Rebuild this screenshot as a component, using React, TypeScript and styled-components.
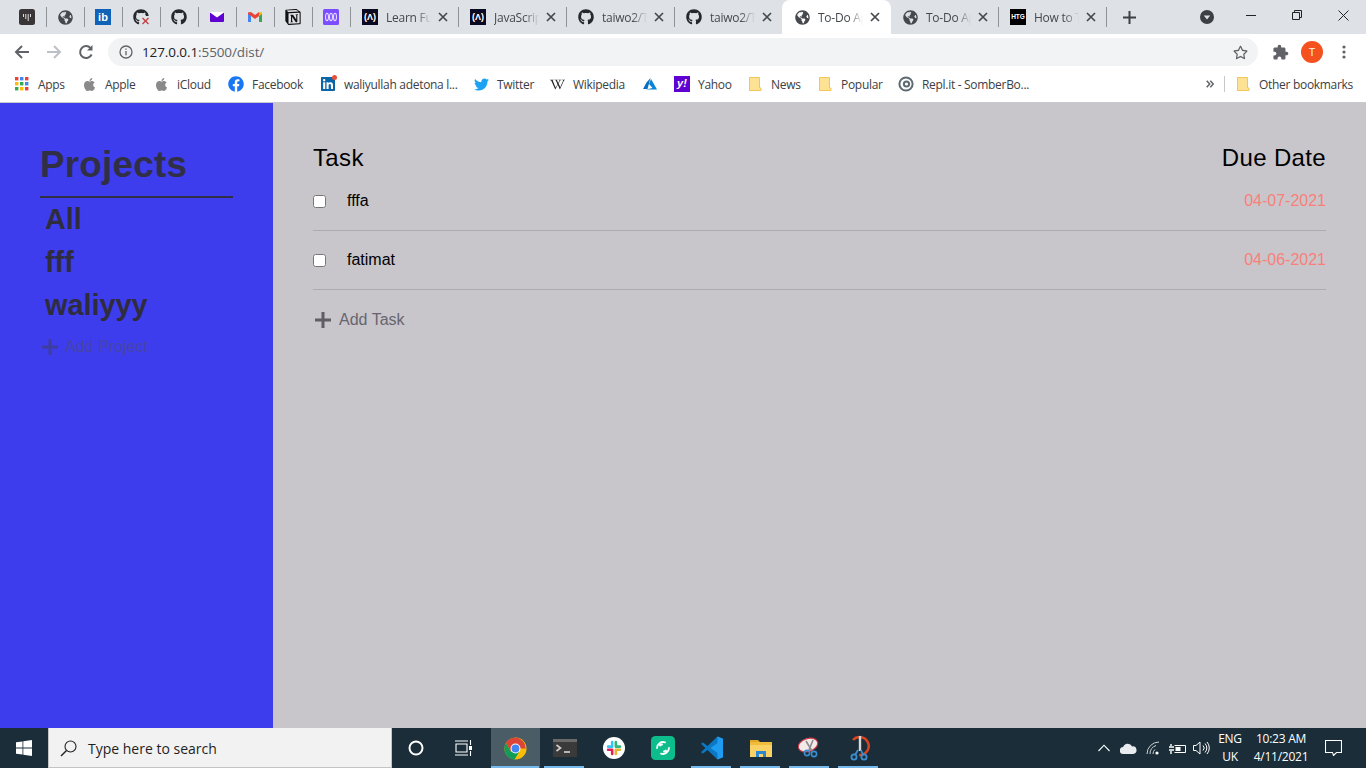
import React from "react";
import styled, { createGlobalStyle } from "styled-components";
import { FaGithub, FaApple, FaFacebook, FaTwitter, FaWikipediaW, FaLinkedin, FaGlobeAmericas, FaRegStar } from "react-icons/fa";
import { SiNotion } from "react-icons/si";

const Global = createGlobalStyle`
  html, body { margin: 0; padding: 0; height: 100%; overflow: hidden; }
  #root { height: 100%; }
  * { box-sizing: border-box; }
`;

const uiFont = `"Open Sans", "Noto Sans", "Liberation Sans", sans-serif`;
const webFont = `"Liberation Sans", Arial, sans-serif`;

const Screen = styled.div`
  display: flex;
  flex-direction: column;
  height: 768px;
  width: 1366px;
  font-family: ${webFont};
`;

/* ---------- Tab strip ---------- */
const TabStrip = styled.div`
  display: flex;
  align-items: stretch;
  height: 34px;
  background: #dee1e6;
  padding-left: 9px;
`;

const Tab = styled.div<{ $wide?: boolean; $active?: boolean }>`
  position: relative;
  flex: none;
  width: ${(p) => (p.$active ? 109 : p.$wide ? 108 : 38)}px;
  margin-left: ${(p) => (p.$active ? -1 : 0)}px;
  display: flex;
  align-items: center;
  justify-content: ${(p) => (p.$wide ? "flex-start" : "center")};
  padding: 0 ${(p) => (p.$wide ? 0 : 2)}px 0 ${(p) => (p.$active ? 12 : p.$wide ? 11 : 0)}px;
  background: ${(p) => (p.$active ? "#ffffff" : "transparent")};
  border-radius: ${(p) => (p.$active ? "8px 8px 0 0" : "0")};
  &::after {
    content: "";
    display: ${(p) => (p.$active ? "none" : "block")};
    position: absolute;
    right: 0;
    top: 7px;
    height: 20px;
    width: 1px;
    background: #8f9296;
  }
`;

const TabIconBox = styled.span`
  flex: none;
  width: 16px;
  height: 16px;
  display: flex;
  align-items: center;
  justify-content: center;
  color: #45484c;
`;

const TabTitle = styled.span`
  flex: none;
  width: 45px;
  margin-left: 8px;
  overflow: hidden;
  white-space: nowrap;
  font: 12px ${uiFont};
  letter-spacing: -0.25px;
  color: #45494e;
  -webkit-mask-image: linear-gradient(to right, #000 68%, transparent 100%);
  mask-image: linear-gradient(to right, #000 68%, transparent 100%);
`;

const TabClose = styled.span`
  flex: none;
  margin-left: 6px;
  width: 12px;
  height: 12px;
  display: flex;
  color: #45484c;
`;

const NewTab = styled.div`
  flex: none;
  width: 46px;
  margin-left: -1px;
  display: flex;
  align-items: center;
  justify-content: center;
  color: #3c4043;
`;

const TabSearch = styled.div`
  flex: none;
  margin-left: auto;
  margin-right: 7px;
  width: 28px;
  display: flex;
  align-items: center;
  justify-content: center;
`;

const WinButton = styled.div`
  flex: none;
  width: 46px;
  display: flex;
  align-items: center;
  justify-content: center;
  padding-bottom: 4px;
  color: #222;
`;

const IbMark = styled.span`
  width: 16px;
  height: 16px;
  background: #0f62b8;
  color: #fff;
  font: bold 11px/16px ${webFont};
  text-align: center;
`;

const FccMark = styled.span`
  width: 16px;
  height: 16px;
  background: #0a0a23;
  color: #fff;
  font: bold 9px/16px ${webFont};
  text-align: center;
  white-space: nowrap;
`;

const HtgMark = styled.span`
  width: 16px;
  height: 16px;
  background: #000;
  color: #fff;
  font: bold 6.5px/16px ${webFont};
  text-align: center;
`;

/* ---------- Toolbar ---------- */
const Toolbar = styled.div`
  display: flex;
  align-items: center;
  height: 35px;
  background: #fff;
  padding: 1px 0 0 6px;
`;

const NavButton = styled.div`
  flex: none;
  width: 32px;
  display: flex;
  justify-content: center;
`;

const Omnibox = styled.div`
  flex: none;
  width: 1150px;
  height: 28px;
  margin-left: 6px;
  border-radius: 14px;
  background: #f1f3f4;
  display: flex;
  align-items: center;
  padding: 0 10px 0 11px;
`;

const Url = styled.span`
  margin-left: 9px;
  font: 13.5px ${uiFont};
  color: #5f6368;
  letter-spacing: -0.1px;
  b { font-weight: 400; color: #202124; }
`;

const OmniEnd = styled.span`
  margin-left: auto;
  display: flex;
  color: #5f6368;
`;

const ToolEnd = styled.div`
  flex: none;
  display: flex;
  align-items: center;
  margin-left: 6px;
`;

const ToolSlot = styled.span`
  flex: none;
  width: 32px;
  display: flex;
  justify-content: center;
  color: #5f6368;
`;

const Avatar = styled.span`
  width: 22px;
  height: 22px;
  border-radius: 50%;
  background: #f4511e;
  color: #fff;
  font: 11px/22px ${uiFont};
  text-align: center;
`;

/* ---------- Bookmarks ---------- */
const Bookmarks = styled.div`
  display: flex;
  align-items: center;
  height: 34px;
  background: #fff;
  border-bottom: 1px solid #c9c9cd;
  padding: 0 0 3px 14px;
`;

const Bookmark = styled.div<{ $w: number }>`
  flex: none;
  width: ${(p) => p.$w}px;
  display: flex;
  align-items: center;
  gap: 8px;
`;

const BmIcon = styled.span`
  position: relative;
  flex: none;
  width: 16px;
  height: 16px;
  display: flex;
  align-items: center;
  justify-content: center;
`;

const BmLabel = styled.span`
  font: 12px ${uiFont};
  letter-spacing: -0.3px;
  color: #3c4043;
  white-space: nowrap;
`;

const Chevrons = styled.span`
  flex: none;
  margin-left: auto;
  display: flex;
`;

const BmDivider = styled.span`
  flex: none;
  width: 1px;
  height: 16px;
  background: #c6c8cb;
  margin: 0 10px;
`;

const YahooMark = styled.span`
  width: 16px;
  height: 16px;
  background: #6001d2;
  color: #fff;
  font: italic bold 11px/15px ${webFont};
  text-align: center;
`;

const NotifyDot = styled.span`
  position: absolute;
  top: -1px;
  right: -1px;
  width: 5px;
  height: 5px;
  border-radius: 50%;
  background: #e8503a;
`;

/* ---------- Page ---------- */
const Page = styled.div`
  flex: 1;
  display: flex;
  min-height: 0;
`;

const Sidebar = styled.aside`
  flex: none;
  width: 273px;
  background: #3d3dee;
  padding: 41px 40px 0;
  color: #2c2a3f;
`;

const SideTitle = styled.h1`
  margin: 0;
  padding-bottom: 10px;
  font-size: 36.8px;
  line-height: 42px;
  font-weight: 700;
  letter-spacing: 0.25px;
  color: #312f45;
  border-bottom: 2px solid #312f45;
`;

const ProjectList = styled.ul`
  list-style: none;
  margin: 0;
  padding: 0 0 0 5px;
`;

const ProjectItem = styled.li`
  font-size: 28.8px;
  font-weight: 700;
  line-height: 33px;
  margin-top: 5px;
  margin-bottom: 10px;
  color: #2f2d3d;
`;

const AddRow = styled.div<{ $muted?: boolean }>`
  display: flex;
  align-items: center;
  font-size: 16px;
  line-height: 18px;
  color: ${(p) => (p.$muted ? "#4644a6" : "#67656f")};
`;

const AddIcon = styled.span<{ $muted?: boolean; $w: number }>`
  flex: none;
  width: ${(p) => p.$w}px;
  padding-left: 1px;
  display: flex;
  color: ${(p) => (p.$muted ? "#3f3da0" : "#5f5d66")};
`;

const SideAdd = styled(AddRow)`
  margin-top: 16px;
`;

const Content = styled.main`
  flex: 1;
  background: #c8c6cb;
  padding: 41px 40px 0 40px;
`;

const HeadRow = styled.div`
  display: flex;
  justify-content: space-between;
  font-size: 24px;
  line-height: 28px;
  letter-spacing: 0.35px;
  color: #000;
`;

const TaskRow = styled.div`
  display: flex;
  align-items: center;
  height: 59px;
  padding-bottom: 1px;
  border-bottom: 1px solid #aeacb2;
`;

const Check = styled.input.attrs({ type: "checkbox" })`
  flex: none;
  margin: 2px 21px 0 0;
  width: 13px;
  height: 13px;
`;

const TaskName = styled.span`
  font-size: 16px;
  color: #000;
`;

const DueDate = styled.span`
  margin-left: auto;
  font-size: 16px;
  color: #f97f7a;
`;

const ContentAdd = styled(AddRow)`
  margin-top: 21px;
`;

/* ---------- Taskbar ---------- */
const Taskbar = styled.div`
  flex: none;
  height: 40px;
  background: #1b2d39;
  display: flex;
  align-items: stretch;
  color: #fff;
`;

const StartButton = styled.div`
  flex: none;
  width: 48px;
  display: flex;
  align-items: center;
  justify-content: center;
`;

const SearchBox = styled.div`
  flex: none;
  width: 344px;
  background: #f2f2f2;
  border: 1px solid #c4c4c4;
  border-top: none;
  display: flex;
  align-items: center;
  padding: 2px 0 0 11px;
  font: 14px ${uiFont};
  color: #1f1f1f;
  gap: 11px;
`;

const BarSlot = styled.div`
  flex: none;
  width: 48px;
  display: flex;
  align-items: center;
  justify-content: center;
`;

const AppGroup = styled.div`
  display: flex;
  align-items: stretch;
  margin-left: 3px;
`;

const AppButton = styled.div<{ $active?: boolean; $running?: boolean }>`
  position: relative;
  flex: none;
  width: 49px;
  display: flex;
  align-items: center;
  justify-content: center;
  background: ${(p) => (p.$active ? "#4a5c66" : "transparent")};
  &::after {
    content: "";
    display: ${(p) => (p.$running || p.$active ? "block" : "none")};
    position: absolute;
    bottom: 0;
    height: 2px;
    left: ${(p) => (p.$active ? 0 : 4)}px;
    right: ${(p) => (p.$active ? 1 : 5)}px;
    background: #76b9ed;
  }
`;

const Tray = styled.div`
  margin-left: auto;
  display: flex;
  align-items: center;
`;

const TraySlot = styled.span<{ $w: number }>`
  flex: none;
  width: ${(p) => p.$w}px;
  display: flex;
  justify-content: center;
`;

const TrayText = styled.span<{ $w: number }>`
  flex: none;
  width: ${(p) => p.$w}px;
  text-align: center;
  font: 12px/18px ${uiFont};
  letter-spacing: -0.25px;
  color: #fff;
  white-space: nowrap;
`;

/* ---------- Icons ---------- */
const CloseX = () => (
  <svg width="12" height="12" viewBox="0 0 12 12" fill="none" stroke="currentColor" strokeWidth="1.7">
    <path d="M2 2l8 8M10 2l-8 8" />
  </svg>
);
const Plus = ({ size = 18 }: { size?: number }) => (
  <svg width={size} height={size} viewBox="0 0 18 18" fill="none" stroke="currentColor" strokeWidth="3">
    <path d="M9 1v16M1 9h16" />
  </svg>
);
const GitXBadge = styled.svg`
  position: absolute;
  right: -1px;
  bottom: 0;
`;
const GitXWrap = styled.span`
  position: relative;
  display: flex;
`;
const Fav = {
  Bars: () => (
    <svg width="16" height="16" viewBox="0 0 16 16">
      <rect width="16" height="16" rx="2.5" fill="#3a3638" />
      <path d="M4.5 5v3M6.8 5v5M9.2 5v7M11.5 5v3" stroke="#ddd" strokeWidth="1" />
    </svg>
  ),
  GitX: () => (
    <GitXWrap>
      <FaGithub size={16} color="#24292e" />
      <GitXBadge width="9" height="9" viewBox="0 0 9 9">
        <rect width="9" height="9" fill="#dee1e6" />
        <path d="M1.5 2l6 6M7.5 2l-6 6" stroke="#c8383a" strokeWidth="1.2" />
      </GitXBadge>
    </GitXWrap>
  ),
  Mail: () => (
    <svg width="16" height="16" viewBox="0 0 16 16">
      <rect x="1" y="3" width="14" height="10" rx="1" fill="#5f01d1" />
      <path d="M1 3.500l7 5 7-5V3H1z" fill="#fff" />
    </svg>
  ),
  Gmail: () => (
    <svg width="16" height="16" viewBox="0 0 16 16">
      <path d="M1 3.500v9.500h3V7z" fill="#4285f4" />
      <path d="M15 3.500v9.500h-3V7z" fill="#34a853" />
      <path d="M1 3.500L4 3l4 3 4-3 .1 4L8 10 4 7 1 5z" fill="#ea4335" />
      <path d="M12 3l3 .5V5l-3 2z" fill="#fbbc04" />
    </svg>
  ),
  Waves: () => (
    <svg width="16" height="16" viewBox="0 0 16 16">
      <rect width="16" height="16" rx="1.500" fill="#7c4dff" />
      <path d="M2.500 8c0-5 3-5 3 0s-3 5-3 0zM6.500 8c0-5 3-5 3 0s-3 5-3 0zM10.500 8c0-5 3-5 3 0s-3 5-3 0z" fill="none" stroke="#e3d8ff" strokeWidth="1.100" />
    </svg>
  ),
};

const Folder = () => (
  <svg width="16" height="16" viewBox="0 0 16 16">
    <path d="M2.500 1.500h10v10.500h1.500v2.500H2.500z" fill="#fde293" stroke="#eec65a" strokeWidth="1" />
  </svg>
);
const AppsGrid = () => (
  <svg width="14" height="14" viewBox="0 0 14 14">
    {[["#ea4335", "#4285f4", "#ea4335"], ["#fbbc04", "#34a853", "#4285f4"], ["#34a853", "#fbbc04", "#ea4335"]].map((row, y) =>
      row.map((c, x) => <rect key={`${x}${y}`} x={x * 5} y={y * 5} width="3.400" height="3.400" fill={c} />)
    )}
  </svg>
);
const Azure = () => (
  <svg width="16" height="16" viewBox="0 0 16 16">
    <path d="M8.500 2L4.500 6.500 1 13h4.500z" fill="#0a6dbf" />
    <path d="M9 3l-2 5 3.500 4L4 13.500h11z" fill="#0a84d6" />
  </svg>
);
const Repl = () => (
  <svg width="16" height="16" viewBox="0 0 16 16" fill="none" stroke="#5d6b70">
    <circle cx="8" cy="8" r="6.600" strokeWidth="2" />
    <circle cx="8.500" cy="8" r="2.600" strokeWidth="2" />
  </svg>
);
const WinLogo = () => (
  <svg width="16" height="16" viewBox="0 0 16 16" fill="#fff">
    <path d="M0 2.300l6.500-.9v6.200H0zM7.300 1.300L16 0v7.600H7.300zM0 8.400h6.500v6.200L0 13.700zM7.300 8.400H16V16l-8.700-1.200z" />
  </svg>
);
const ChromeIcon = () => (
  <svg width="23" height="23" viewBox="0 0 24 24">
    <circle cx="12" cy="12" r="11.500" fill="#fbbc04" />
    <path d="M12 .5A11.500 11.500 0 0 0 2 6.300L7 15l5-3h10.700A11.500 11.500 0 0 0 12 .5z" fill="#db4437" />
    <path d="M2 6.300A11.500 11.500 0 0 0 11 23.500l5-8.500-9 0z" fill="#0f9d58" />
    <circle cx="12" cy="12" r="5.200" fill="#fff" />
    <circle cx="12" cy="12" r="4.100" fill="#4285f4" />
  </svg>
);
const TerminalIcon = () => (
  <svg width="24" height="18" viewBox="0 0 24 18">
    <rect width="24" height="18" rx="1" fill="#3a3a3a" />
    <rect width="24" height="3" fill="#6a6a6a" />
    <path d="M3.500 6l4 3-4 3" fill="none" stroke="#ccc" strokeWidth="1.700" />
    <path d="M11 13h6" stroke="#ccc" strokeWidth="1.700" />
  </svg>
);
const SlackIcon = () => (
  <svg width="22" height="22" viewBox="0 0 24 24" fill="none" strokeWidth="2.800" strokeLinecap="round">
    <circle cx="12" cy="12" r="12" fill="#fff" />
    <path d="M10 5.500v5M10 10.500H5.500" stroke="#36c5f0" />
    <path d="M18.500 10.500H14M14 5.500v5" stroke="#2eb67d" />
    <path d="M14 18.500V14M14 14h4.500" stroke="#ecb22e" />
    <path d="M5.500 14H10M10 14v4.500" stroke="#e01e5a" />
  </svg>
);
const ElementIcon = () => (
  <svg width="24" height="24" viewBox="0 0 24 24" fill="none" stroke="#fff" strokeWidth="1.800" strokeLinecap="round">
    <rect width="24" height="24" rx="4.500" fill="#0dbd8b" stroke="none" />
    <path d="M6 12a6 6 0 0 1 8-5.600M18 12a6 6 0 0 1-8 5.600M9 9.500a3.800 3.800 0 0 1 2-1M15 14.500a3.800 3.800 0 0 1-2 1" />
  </svg>
);
const VsCodeIcon = () => (
  <svg width="24" height="24" viewBox="0 0 24 24">
    <path d="M17.500 0.500L7.500 10 3 6.500 1 7.700 5.400 12 1 16.300l2 1.200L7.500 14l10 9.500 5.500-2.300V2.800z" fill="#0a78c4" />
    <path d="M17.500 0.500l5.500 2.300v18.400l-5.500 2.300z M17.500 7L10.500 12l7 5z" fill="#1f9cf0" fillRule="evenodd" />
  </svg>
);
const FolderIcon = () => (
  <svg width="22" height="22" viewBox="0 0 22 22">
    <path d="M0 3h8l2 2H0z" fill="#e0a825" />
    <path d="M0 5h22v15H0z" fill="#fad165" />
    <path d="M0 5h22v3H0z" fill="#f0bc3c" />
    <path d="M6 14h10v6h-3v-3H9v3H6z" fill="#2b87d3" />
  </svg>
);
const SnipIcon = () => (
  <svg width="24" height="24" viewBox="0 0 24 24">
    <ellipse cx="10" cy="9" rx="10" ry="6.500" transform="rotate(-18 10 9)" fill="#f4e9e9" stroke="#c83b46" strokeWidth="1.200" />
    <path d="M8 5l6 10M15 4l-4 10" stroke="#8c8c8c" strokeWidth="1.600" />
    <circle cx="16" cy="18" r="2.600" fill="none" stroke="#3b8ed0" strokeWidth="1.600" />
    <circle cx="9" cy="17" r="2.600" fill="none" stroke="#3b8ed0" strokeWidth="1.600" />
  </svg>
);
const ScissorsIcon = () => (
  <svg width="22" height="26" viewBox="0 0 22 26" fill="none">
    <path d="M5 5a9 9 0 1 1 6 15" stroke="#d8431f" strokeWidth="2.600" />
    <path d="M12 1v15" stroke="#d9d9d9" strokeWidth="2.400" />
    <path d="M10 15l-3 5M13 15l2 5" stroke="#3b8ed0" strokeWidth="1.800" />
    <circle cx="6" cy="22" r="2.600" stroke="#3b8ed0" strokeWidth="1.800" />
    <circle cx="16" cy="22" r="2.600" stroke="#3b8ed0" strokeWidth="1.800" />
  </svg>
);

const tabs: { id: string; icon: React.ReactNode; title?: string; active?: boolean }[] = [
  { id: "a", icon: <Fav.Bars /> },
  { id: "b", icon: <FaGlobeAmericas size={15} /> },
  { id: "c", icon: <IbMark>ib</IbMark> },
  { id: "d", icon: <Fav.GitX /> },
  { id: "e", icon: <FaGithub size={16} color="#24292e" /> },
  { id: "f", icon: <Fav.Mail /> },
  { id: "g", icon: <Fav.Gmail /> },
  { id: "h", icon: <SiNotion size={16} color="#111" /> },
  { id: "i", icon: <Fav.Waves /> },
  { id: "j", icon: <FccMark>(Λ)</FccMark>, title: "Learn Functional" },
  { id: "k", icon: <FccMark>(Λ)</FccMark>, title: "JavaScript Tutorial" },
  { id: "l", icon: <FaGithub size={16} color="#24292e" />, title: "taiwo2/Todo" },
  { id: "m", icon: <FaGithub size={16} color="#24292e" />, title: "taiwo2/Todo" },
  { id: "n", icon: <FaGlobeAmericas size={15} />, title: "To-Do App", active: true },
  { id: "o", icon: <FaGlobeAmericas size={15} />, title: "To-Do App" },
  { id: "p", icon: <HtgMark>HTG</HtgMark>, title: "How to Turn" },
];

const marks: { label: string; w: number; icon: React.ReactNode }[] = [
  { label: "Apps", w: 67, icon: <AppsGrid /> },
  { label: "Apple", w: 72, icon: <FaApple size={15} color="#8a8a8a" /> },
  { label: "iCloud", w: 75, icon: <FaApple size={15} color="#8a8a8a" /> },
  { label: "Facebook", w: 92, icon: <FaFacebook size={16} color="#1877f2" /> },
  { label: "waliyullah adetona l...", w: 153, icon: <><FaLinkedin size={16} color="#0a66a8" /><NotifyDot /></> },
  { label: "Twitter", w: 76, icon: <FaTwitter size={15} color="#1da1f2" /> },
  { label: "Wikipedia", w: 93, icon: <FaWikipediaW size={15} color="#222" /> },
  { label: "", w: 32, icon: <Azure /> },
  { label: "Yahoo", w: 73, icon: <YahooMark>y!</YahooMark> },
  { label: "News", w: 70, icon: <Folder /> },
  { label: "Popular", w: 81, icon: <Folder /> },
  { label: "Repl.it - SomberBo...", w: 140, icon: <Repl /> },
];

const apps: { id: string; icon: React.ReactNode; active?: boolean; running?: boolean }[] = [
  { id: "chrome", icon: <ChromeIcon />, active: true },
  { id: "term", icon: <TerminalIcon />, running: true },
  { id: "slack", icon: <SlackIcon /> },
  { id: "element", icon: <ElementIcon /> },
  { id: "code", icon: <VsCodeIcon />, running: true },
  { id: "folder", icon: <FolderIcon />, running: true },
  { id: "snip", icon: <SnipIcon />, running: true },
  { id: "sciss", icon: <ScissorsIcon />, running: true },
];

const todo = [
  { name: "fffa", date: "04-07-2021" },
  { name: "fatimat", date: "04-06-2021" },
];

export default function App() {
  return (
    <Screen>
      <Global />
      <TabStrip>
        {tabs.map((t) => (
          <Tab key={t.id} $wide={!!t.title} $active={t.active}>
            <TabIconBox>{t.icon}</TabIconBox>
            {t.title && <TabTitle>{t.title}</TabTitle>}
            {t.title && (
              <TabClose>
                <CloseX />
              </TabClose>
            )}
          </Tab>
        ))}
        <NewTab>
          <svg width="13" height="13" viewBox="0 0 13 13" stroke="currentColor" strokeWidth="2">
            <path d="M6.500 0v13M0 6.500h13" />
          </svg>
        </NewTab>
        <TabSearch>
          <svg width="14" height="14" viewBox="0 0 14 14">
            <circle cx="7" cy="7" r="7" fill="#3c4043" />
            <path d="M3.800 5.600h6.400L7 9.400z" fill="#dee1e6" />
          </svg>
        </TabSearch>
        <WinButton>
          <svg width="10" height="10" viewBox="0 0 10 10" stroke="currentColor">
            <path d="M0 5.500h10" />
          </svg>
        </WinButton>
        <WinButton>
          <svg width="10" height="10" viewBox="0 0 10 10" fill="none" stroke="currentColor">
            <path d="M.5 2.500h7v7h-7zM2.500 2.500v-2h7v7h-2" />
          </svg>
        </WinButton>
        <WinButton>
          <svg width="11" height="11" viewBox="0 0 11 11" fill="none" stroke="currentColor">
            <path d="M.5.5l10 10M10.500.5l-10 10" />
          </svg>
        </WinButton>
      </TabStrip>

      <Toolbar>
        <NavButton>
          <svg width="16" height="16" viewBox="0 0 16 16" fill="none" stroke="#5f6368" strokeWidth="2">
            <path d="M15 8H2M8 2L2 8l6 6" />
          </svg>
        </NavButton>
        <NavButton>
          <svg width="16" height="16" viewBox="0 0 16 16" fill="none" stroke="#bdc1c6" strokeWidth="2">
            <path d="M1 8h13M8 2l6 6-6 6" />
          </svg>
        </NavButton>
        <NavButton>
          <svg width="16" height="16" viewBox="0 0 16 16" fill="none" stroke="#5f6368" strokeWidth="2">
            <path d="M13.600 10.500A6 6 0 1 1 12.500 4" />
            <path d="M14.500 1v5.500H9" fill="#5f6368" stroke="none" />
          </svg>
        </NavButton>
        <Omnibox>
          <svg width="14" height="14" viewBox="0 0 14 14" fill="none" stroke="#5f6368" strokeWidth="1.300">
            <circle cx="7" cy="7" r="6" />
            <path d="M7 6v4.200M7 3.400v1.400" />
          </svg>
          <Url>
            <b>127.0.0.1</b>:5500/dist/
          </Url>
          <OmniEnd>
            <FaRegStar size={15} />
          </OmniEnd>
        </Omnibox>
        <ToolEnd>
          <ToolSlot>
            <svg width="17" height="17" viewBox="0 0 24 24" fill="currentColor">
              <path d="M20.500 11H19V7c0-1.100-.9-2-2-2h-4V3.500C13 2.120 11.880 1 10.500 1S8 2.120 8 3.500V5H4c-1.100 0-1.990.9-1.990 2v3.800H3.500c1.490 0 2.700 1.210 2.700 2.700s-1.210 2.700-2.700 2.700H2V20c0 1.100.9 2 2 2h3.800v-1.500c0-1.490 1.210-2.700 2.700-2.700 1.490 0 2.700 1.210 2.700 2.700V22H17c1.100 0 2-.9 2-2v-4h1.500c1.380 0 2.500-1.120 2.500-2.500S21.880 11 20.500 11z" />
            </svg>
          </ToolSlot>
          <ToolSlot>
            <Avatar>T</Avatar>
          </ToolSlot>
          <ToolSlot>
            <svg width="4" height="14" viewBox="0 0 4 14" fill="#5f6368">
              <circle cx="2" cy="2" r="1.600" />
              <circle cx="2" cy="7" r="1.600" />
              <circle cx="2" cy="12" r="1.600" />
            </svg>
          </ToolSlot>
        </ToolEnd>
      </Toolbar>

      <Bookmarks>
        {marks.map((m) => (
          <Bookmark key={m.label + m.w} $w={m.w}>
            <BmIcon>{m.icon}</BmIcon>
            {m.label && <BmLabel>{m.label}</BmLabel>}
          </Bookmark>
        ))}
        <Chevrons>
          <svg width="8" height="8" viewBox="0 0 8 8" fill="none" stroke="#5f6368" strokeWidth="1.500">
            <path d="M.7.7L3.700 4 .7 7.300M4.300.7L7.300 4 4.300 7.300" />
          </svg>
        </Chevrons>
        <BmDivider />
        <Bookmark $w={131}>
          <BmIcon>
            <Folder />
          </BmIcon>
          <BmLabel>Other bookmarks</BmLabel>
        </Bookmark>
      </Bookmarks>

      <Page>
        <Sidebar>
          <SideTitle>Projects</SideTitle>
          <ProjectList>
            <ProjectItem>All</ProjectItem>
            <ProjectItem>fff</ProjectItem>
            <ProjectItem>waliyyy</ProjectItem>
          </ProjectList>
          <SideAdd $muted>
            <AddIcon $muted $w={25}>
              <Plus />
            </AddIcon>
            Add Project
          </SideAdd>
        </Sidebar>
        <Content>
          <HeadRow>
            <span>Task</span>
            <span>Due Date</span>
          </HeadRow>
          {todo.map((t) => (
            <TaskRow key={t.name}>
              <Check />
              <TaskName>{t.name}</TaskName>
              <DueDate>{t.date}</DueDate>
            </TaskRow>
          ))}
          <ContentAdd>
            <AddIcon $w={26}>
              <Plus />
            </AddIcon>
            Add Task
          </ContentAdd>
        </Content>
      </Page>

      <Taskbar>
        <StartButton>
          <WinLogo />
        </StartButton>
        <SearchBox>
          <svg width="17" height="17" viewBox="0 0 17 17" fill="none" stroke="#222" strokeWidth="1.100">
            <circle cx="10.500" cy="6.500" r="5.500" />
            <path d="M6.500 10.500L1 16" strokeWidth="1.400" />
          </svg>
          Type here to search
        </SearchBox>
        <BarSlot>
          <svg width="16" height="16" viewBox="0 0 16 16" fill="none" stroke="#fff" strokeWidth="2">
            <circle cx="8" cy="8" r="6.500" />
          </svg>
        </BarSlot>
        <BarSlot>
          <svg width="18" height="16" viewBox="0 0 18 16" fill="none" stroke="#fff" strokeWidth="1.100">
            <path d="M0 1h13M0 15h13M1 4h11v8H1zM15.500 0v5M15.500 11v5" />
            <rect x="14" y="6" width="3" height="4" fill="#fff" stroke="none" />
          </svg>
        </BarSlot>
        <AppGroup>
          {apps.map((a) => (
            <AppButton key={a.id} $active={a.active} $running={a.running}>
              {a.icon}
            </AppButton>
          ))}
        </AppGroup>
        <Tray>
          <TraySlot $w={24}>
            <svg width="12" height="8" viewBox="0 0 12 8" fill="none" stroke="#fff" strokeWidth="1.100">
              <path d="M.5 7L6 1.200 11.500 7" />
            </svg>
          </TraySlot>
          <TraySlot $w={24}>
            <svg width="17" height="11" viewBox="0 0 17 11" fill="#e8ecee">
              <path d="M3.500 11a3.500 3.500 0 0 1-.4-7A5 5 0 0 1 12.200 3.400 3.800 3.800 0 0 1 13.200 11z" />
            </svg>
          </TraySlot>
          <TraySlot $w={25}>
            <svg width="14" height="14" viewBox="0 0 14 14" fill="none" stroke="#ccd2d5" strokeWidth="1">
              <path d="M1 13A12 12 0 0 1 13 1M4 13a9 9 0 0 1 6-8.500M7 13a6 6 0 0 1 2-4.500" />
              <circle cx="11" cy="12" r="1.600" fill="#fff" stroke="none" />
            </svg>
          </TraySlot>
          <TraySlot $w={24}>
            <svg width="17" height="13" viewBox="0 0 17 13" fill="none" stroke="#fff">
              <path d="M5.500 3.500h11v7h-11" />
              <rect x="6.500" y="5" width="5" height="4" fill="#fff" stroke="none" />
              <path d="M0 5h5M0 8h5M2 2v2M2 9v3" strokeWidth="1.400" />
            </svg>
          </TraySlot>
          <TraySlot $w={24}>
            <svg width="17" height="14" viewBox="0 0 17 14" fill="none" stroke="#fff">
              <path d="M.5 4.500H3L7 1v12L3 9.500H.5zM10 4.500a3.500 3.500 0 0 1 0 5M12 2.500a6.500 6.500 0 0 1 0 9M14 1a9 9 0 0 1 0 12" />
            </svg>
          </TraySlot>
          <TrayText $w={34}>
            ENG
            <br />
            UK
          </TrayText>
          <TrayText $w={68}>
            10:23 AM
            <br />
            4/11/2021
          </TrayText>
          <TraySlot $w={36}>
            <svg width="17" height="16" viewBox="0 0 17 16" fill="none" stroke="#fff" strokeWidth="1.100">
              <path d="M.5.5h16v12h-5L8.500 15.500l-1-3h-7z" />
            </svg>
          </TraySlot>
          <TraySlot $w={15} />
        </Tray>
      </Taskbar>
    </Screen>
  );
}
